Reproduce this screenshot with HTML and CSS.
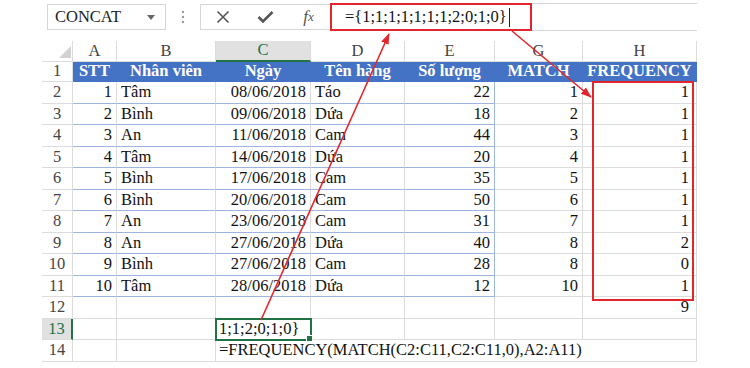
FILE: index.html
```html
<!DOCTYPE html>
<html lang="vi">

<head>
    <meta charset="UTF-8">
    <meta name="viewport" content="width=device-width, initial-scale=1.0">
    <title>FREQUENCY</title>
    <link rel="stylesheet" href="styles.css">
</head>

<body>
    <!-- thanh cong thuc -->
    <div class="toolbar">
        <div class="namebox">
            <span>CONCAT</span>
            <svg width="8" height="5" viewBox="0 0 8 5"><path d="M0 0 L8 0 L4 5 z" fill="#666"/></svg>
        </div>
        <div class="grip">
            <svg width="4" height="14" viewBox="0 0 4 14"><circle cx="2" cy="2" r="1.2" fill="#9a9a9a"/><circle cx="2" cy="7" r="1.2" fill="#9a9a9a"/><circle cx="2" cy="12" r="1.2" fill="#9a9a9a"/></svg>
        </div>
        <div class="fbtns">
            <span class="btn"><svg width="14" height="14" viewBox="0 0 14 14"><path d="M1.5 1.5 L12.5 12.5 M12.5 1.5 L1.5 12.5" stroke="#555" stroke-width="1.6" fill="none"/></svg></span>
            <span class="btn"><svg width="17" height="14" viewBox="0 0 17 14"><path d="M1.5 7 L6 11.5 L15.5 2" stroke="#555" stroke-width="2.6" fill="none"/></svg></span>
            <span class="btn fx">f<small>x</small></span>
        </div>
        <div class="fbar">
            <span class="formula">={1;1;1;1;1;1;1;2;0;1;0}<i class="cursor"></i></span>
        </div>
    </div>

    <!-- bang tinh -->
    <div class="sheet">
        <div class="c corner"><svg width="12" height="12" viewBox="0 0 12 12"><path d="M12 0 L12 12 L0 12 z" fill="#d2d2d2"/></svg></div>
        <div class="c colh">A</div>
        <div class="c colh">B</div>
        <div class="c colh active">C</div>
        <div class="c colh">D</div>
        <div class="c colh">E</div>
        <div class="c colh">G</div>
        <div class="c colh">H</div>

        <div class="c rowh">1</div>
        <div class="c hd">STT</div>
        <div class="c hd">Nhân viên</div>
        <div class="c hd">Ngày</div>
        <div class="c hd">Tên hàng</div>
        <div class="c hd">Số lượng</div>
        <div class="c hd">MATCH</div>
        <div class="c hd">FREQUENCY</div>

        <div class="c rowh">2</div>
        <div class="c tb num">1</div>
        <div class="c tb">Tâm</div>
        <div class="c tb num">08/06/2018</div>
        <div class="c tb">Táo</div>
        <div class="c tb e num">22</div>
        <div class="c num">1</div>
        <div class="c num h">1</div>

        <div class="c rowh">3</div>
        <div class="c tb num">2</div>
        <div class="c tb">Bình</div>
        <div class="c tb num">09/06/2018</div>
        <div class="c tb">Dứa</div>
        <div class="c tb e num">18</div>
        <div class="c num">2</div>
        <div class="c num h">1</div>

        <div class="c rowh">4</div>
        <div class="c tb num">3</div>
        <div class="c tb">An</div>
        <div class="c tb num">11/06/2018</div>
        <div class="c tb">Cam</div>
        <div class="c tb e num">44</div>
        <div class="c num">3</div>
        <div class="c num h">1</div>

        <div class="c rowh">5</div>
        <div class="c tb num">4</div>
        <div class="c tb">Tâm</div>
        <div class="c tb num">14/06/2018</div>
        <div class="c tb">Dứa</div>
        <div class="c tb e num">20</div>
        <div class="c num">4</div>
        <div class="c num h">1</div>

        <div class="c rowh">6</div>
        <div class="c tb num">5</div>
        <div class="c tb">Bình</div>
        <div class="c tb num">17/06/2018</div>
        <div class="c tb">Cam</div>
        <div class="c tb e num">35</div>
        <div class="c num">5</div>
        <div class="c num h">1</div>

        <div class="c rowh">7</div>
        <div class="c tb num">6</div>
        <div class="c tb">Bình</div>
        <div class="c tb num">20/06/2018</div>
        <div class="c tb">Cam</div>
        <div class="c tb e num">50</div>
        <div class="c num">6</div>
        <div class="c num h">1</div>

        <div class="c rowh">8</div>
        <div class="c tb num">7</div>
        <div class="c tb">An</div>
        <div class="c tb num">23/06/2018</div>
        <div class="c tb">Cam</div>
        <div class="c tb e num">31</div>
        <div class="c num">7</div>
        <div class="c num h">1</div>

        <div class="c rowh">9</div>
        <div class="c tb num">8</div>
        <div class="c tb">An</div>
        <div class="c tb num">27/06/2018</div>
        <div class="c tb">Dứa</div>
        <div class="c tb e num">40</div>
        <div class="c num">8</div>
        <div class="c num h">2</div>

        <div class="c rowh">10</div>
        <div class="c tb num">9</div>
        <div class="c tb">Bình</div>
        <div class="c tb num">27/06/2018</div>
        <div class="c tb">Cam</div>
        <div class="c tb e num">28</div>
        <div class="c num">8</div>
        <div class="c num h">0</div>

        <div class="c rowh">11</div>
        <div class="c tb num">10</div>
        <div class="c tb">Tâm</div>
        <div class="c tb num">28/06/2018</div>
        <div class="c tb">Dứa</div>
        <div class="c tb e num">12</div>
        <div class="c num">10</div>
        <div class="c num h">1</div>

        <div class="c rowh">12</div>
        <div class="c"></div>
        <div class="c"></div>
        <div class="c"></div>
        <div class="c"></div>
        <div class="c"></div>
        <div class="c"></div>
        <div class="c num h">9</div>

        <div class="c rowh active">13</div>
        <div class="c"></div>
        <div class="c"></div>
        <div class="c sel">1;1;2;0;1;0}</div>
        <div class="c"></div>
        <div class="c"></div>
        <div class="c"></div>
        <div class="c"></div>

        <div class="c rowh">14</div>
        <div class="c"></div>
        <div class="c"></div>
        <div class="c long">=FREQUENCY(MATCH(C2:C11,C2:C11,0),A2:A11)</div>
    </div>

    <!-- mui ten chu thich -->
    <svg class="notes" width="750" height="368" viewBox="0 0 750 368">
        <defs>
            <marker id="ah" markerWidth="11" markerHeight="8" refX="10" refY="4" orient="auto" markerUnits="userSpaceOnUse">
                <path d="M0 0 L11 4 L0 8 z" fill="#e3262b"/>
            </marker>
        </defs>
        <line x1="261" y1="320" x2="389" y2="34" stroke="#e3262b" stroke-width="1.6" marker-end="url(#ah)"/>
        <line x1="512" y1="31" x2="591" y2="97" stroke="#e3262b" stroke-width="1.6" marker-end="url(#ah)"/>
        <rect x="593" y="82" width="100" height="218" fill="none" stroke="#e3262b" stroke-width="2"/>
    </svg>
</body>

</html>
```
FILE: styles.css
```css
body {
    margin: 0;
    width: 750px;
    height: 368px;
    position: relative;
    overflow: hidden;
    background: #fff;
    font-family: "Liberation Serif", "Times New Roman", serif;
    color: #111;
}

.toolbar {
    display: flex;
    height: 41px;
    padding-left: 47px;
    box-sizing: border-box;
}

.namebox {
    width: 119px;
    height: 26px;
    margin-top: 4px;
    border: 1px solid #d6d6d6;
    box-sizing: border-box;
    display: flex;
    align-items: center;
    justify-content: space-between;
    padding: 0 10px 0 7px;
    font-size: 16.5px;
    color: #222;
}

.grip {
    width: 34px;
    height: 26px;
    margin-top: 4px;
    display: flex;
    align-items: center;
    justify-content: center;
}

.fbtns {
    width: 130px;
    height: 26px;
    margin-top: 4px;
    border: 1px solid #d6d6d6;
    border-right: none;
    box-sizing: border-box;
    display: flex;
}

.btn {
    flex: 1;
    display: flex;
    align-items: center;
    justify-content: center;
}

.fx {
    font-style: italic;
    font-size: 17px;
    color: #555;
}

.fx small {
    font-size: 13px;
}

.fbar {
    width: 367px;
    height: 28px;
    margin-top: 3px;
    border-top: 1px solid #d6d6d6;
    border-bottom: 1px solid #d6d6d6;
    box-sizing: border-box;
}

.formula {
    display: flex;
    align-items: center;
    width: 202px;
    height: 28px;
    margin-top: -1px;
    padding-left: 13px;
    border: 2px solid #e3262b;
    box-sizing: border-box;
    font-size: 16.5px;
}

.cursor {
    width: 1px;
    height: 19px;
    margin-left: 2px;
    background: #222;
}

.sheet {
    display: grid;
    grid-template-columns: 31px 44px 99px 95px 94px 90px 88px 114px;
    grid-template-rows: 21px 20px repeat(13, 21.5px);
    margin-left: 42px;
}

.c {
    display: flex;
    align-items: center;
    padding: 0 4px;
    border-right: 1px solid #dcdcdc;
    border-bottom: 1px solid #dcdcdc;
    box-sizing: border-box;
    font-size: 16.5px;
    line-height: 1;
    white-space: nowrap;
}

.num {
    justify-content: flex-end;
}

.h {
    padding-right: 7px;
}

.corner {
    justify-content: flex-end;
    align-items: flex-end;
    padding: 0 1px 3px 0;
}

.colh,
.rowh {
    justify-content: center;
    color: #444;
}

.colh.active {
    background: #e1e1e1;
    color: #217346;
    border-bottom: 2px solid #217346;
}

.rowh.active {
    background: #e1e1e1;
    color: #217346;
    border-right: 2px solid #217346;
}

.hd {
    justify-content: center;
    background: #4472c4;
    border-color: #4472c4;
    color: #fff;
    font-weight: bold;
}

.tb {
    border-bottom-color: #9db5df;
}

.e {
    border-right-color: #9db5df;
}

.sel {
    position: relative;
    padding-left: 3px;
    outline: 2px solid #217346;
    outline-offset: -1px;
}

.sel::after {
    content: '';
    position: absolute;
    right: -3px;
    bottom: -3px;
    width: 5px;
    height: 5px;
    background: #217346;
    border: 1px solid #fff;
}

.long {
    grid-column: span 5;
    padding-left: 3px;
}

.notes {
    position: absolute;
    left: 0;
    top: 0;
    pointer-events: none;
}
```
